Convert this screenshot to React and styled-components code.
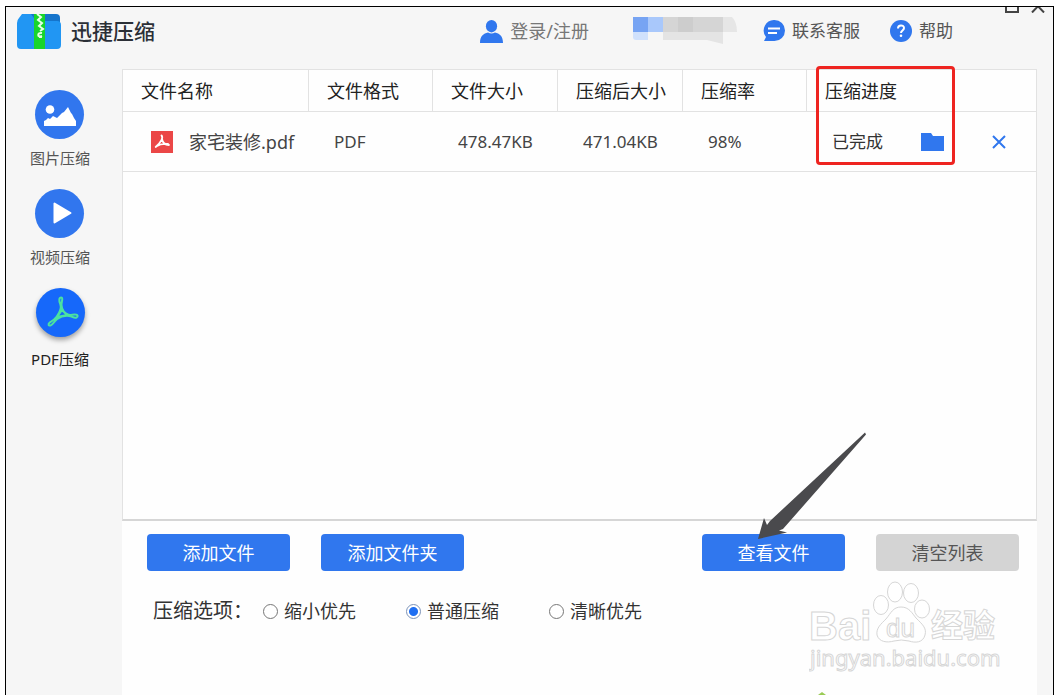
import React, { useState } from 'react';
import styled, { createGlobalStyle } from 'styled-components';

const GlobalStyle = createGlobalStyle`
  * {
    box-sizing: border-box;
  }

  body {
    margin: 0;
    background: #fff;
    color: #333;
    font-family: 'Noto Sans', 'Noto Sans CJK SC', sans-serif;
    overflow: hidden;
  }

  button {
    border: 0;
    padding: 0;
    background: none;
    color: inherit;
    font: inherit;
    cursor: pointer;
  }

  svg {
    display: block;
    flex-shrink: 0;
  }
`;

const Page = styled.div`
  display: flex;
  min-height: 100vh;
  padding: 6px 1px 0 5px;
`;

const Window = styled.div`
  position: relative;
  display: flex;
  flex: 1;
  flex-direction: column;
  border: 1px solid #000;
  border-bottom: 0;
  background: #f6f6f6;
`;

const Header = styled.header`
  position: relative;
  display: flex;
  align-items: center;
  justify-content: space-between;
  height: 48px;
  padding: 0 100px 0 11px;
`;

const Brand = styled.div`
  display: flex;
  align-items: center;
  gap: 10px;
  font-size: 21px;
  font-weight: 500;
  line-height: 30px;
  color: #2b2f36;
`;

const Nav = styled.nav`
  display: flex;
  align-items: center;
  gap: 30px;
`;

const NavLink = styled.a`
  display: flex;
  align-items: center;
  gap: 7px;
  font-size: ${props => (props.$light ? '18px' : '17px')};
  line-height: 24px;
  color: ${props => (props.$light ? '#777' : '#555')};
  text-decoration: none;
`;

const Account = styled.div`
  display: flex;
  align-items: center;
  gap: 44px;
  margin-right: -4px;
`;

const WindowControls = styled.div`
  position: absolute;
  top: 0;
  right: 8px;
  display: flex;
  gap: 12px;
`;

const Body = styled.div`
  display: flex;
  flex: 1;
  padding: 14px 16px 0 0;
`;

const Sidebar = styled.aside`
  display: flex;
  flex-direction: column;
  align-items: center;
  gap: 21px;
  width: 116px;
  padding: 21px 8px 0 0;
`;

const SideButton = styled.button`
  display: flex;
  flex-direction: column;
  align-items: center;
  gap: ${props => (props.$active ? '12px' : '9px')};
  font-size: 15px;
  line-height: 20px;
  color: ${props => (props.$active ? '#222' : '#555')};
`;

const SideIcon = styled.span`
  border-radius: 50%;
  background: ${props => (props.$active ? '#1668fa' : '#3176ee')};
  box-shadow: ${props => (props.$active ? '0 3px 5px rgba(0, 0, 0, 0.35)' : 'none')};
`;

const Main = styled.main`
  display: flex;
  flex: 1;
  flex-direction: column;
  background: #fefefe;
`;

const FilePanel = styled.section`
  position: relative;
  flex: 1;
  border: 1px solid #e2e2e2;
  border-bottom: 2px solid #d6d6d6;
`;

const FileTable = styled.table`
  width: 100%;
  border-collapse: separate;
  border-spacing: 0;
  table-layout: fixed;
  text-align: left;
`;

const HeadCell = styled.th`
  width: ${props => props.$width || 'auto'};
  height: 42px;
  padding: 0 0 0 18px;
  border-bottom: 1px solid #e2e2e2;
  border-left: ${props => (props.$first ? '0' : '1px solid #e2e2e2')};
  font-size: 18px;
  font-weight: 400;
  line-height: 26px;
  color: #222;
  white-space: nowrap;
`;

const Cell = styled.td`
  height: 60px;
  padding: 0 0 0 26px;
  border-bottom: 1px solid #e2e2e2;
  font-size: 17px;
  line-height: 26px;
  color: #444;
  white-space: nowrap;
`;

const FileName = styled.div`
  display: flex;
  align-items: center;
  gap: 16px;
  padding-left: 2px;
  font-size: 18px;
`;

const Status = styled.div`
  display: flex;
  align-items: center;
  gap: 48px;
  color: #333;
`;

const StatusText = styled.span`
  width: 89px;
  margin-right: -48px;
`;

const Highlight = styled.div`
  position: absolute;
  top: -4px;
  right: 81px;
  width: 139px;
  height: 99px;
  border: 3px solid #ee2420;
  border-radius: 4px;
  pointer-events: none;
`;

const Footer = styled.footer`
  padding: 13px 18px 70px 25px;
`;

const Actions = styled.div`
  display: flex;
  justify-content: space-between;
`;

const ActionGroup = styled.div`
  display: flex;
  gap: 31px;
`;

const ActionButton = styled.button`
  position: relative;
  width: 143px;
  height: 37px;
  border-radius: 4px;
  background: ${props => (props.$muted ? '#d4d4d4' : '#3077ee')};
  color: ${props => (props.$muted ? '#555' : '#fff')};
  font-size: 18px;
  line-height: 26px;
`;

const Pointer = styled.svg`
  position: absolute;
  top: -102px;
  left: 55px;
  pointer-events: none;
`;

const Options = styled.fieldset`
  display: flex;
  align-items: center;
  margin: 26px 0 0;
  padding: 0 0 0 6px;
  border: 0;
`;

const OptionsTitle = styled.span`
  width: 110px;
  font-size: 20px;
  line-height: 28px;
  color: #333;
`;

const Option = styled.label`
  display: flex;
  align-items: center;
  gap: 6px;
  width: 143px;
  font-size: 18px;
  line-height: 28px;
  color: #333;
  white-space: nowrap;
`;

const Radio = styled.input`
  appearance: none;
  flex-shrink: 0;
  width: 15px;
  height: 15px;
  margin: 0;
  border: 1px solid #777;
  border-radius: 50%;
  background: #fff;

  &:checked {
    border-color: #7d93b8;
    background: radial-gradient(circle, #1f6ff2 4px, #fff 5px);
  }
`;

const Watermark = styled.svg`
  position: absolute;
  right: 48px;
  bottom: 18px;
  pointer-events: none;
`;

const Sprout = styled.svg`
  position: absolute;
  right: 227px;
  bottom: 0;
`;

const ACROBAT =
  'M25.2 9.5c-2.2 0-2.4 3-1 6.5 1.6 4 0 8-3.4 12.5-2.6 3.4-4.6 4.3-6.8 5.8-2.4 1.8-1.6 4 .8 3 2.4-1 3.6-4.2 6.4-6.4 4.5-3.4 8.5-3.4 12-3 3 .6 5 2.4 7.3 1.6 2-.8 1.2-3-1-3-2.7-.2-4.6.9-7 .2-4-1.2-6.6-5-7-9.500-.2-3 2-7.700-.3-7.700z';

const Logo = () => (
  <svg width="44" height="35" viewBox="0 0 44 35">
    <path d="M7 0h32q4 0 4 4v14H1V7z" fill="#1574cb" />
    <path d="M5 0h9l5 7h21q4 0 4 4v20q0 4-4 4H4q-4 0-4-4V9q0-3 2-5z" fill="#2196f3" />
    <path d="M17 0h11v35H17z" fill="#18d52c" />
    <path d="M20 0l4 3-3 3 4 3-3 3 4 3-3 2" fill="none" stroke="#e6ffe8" strokeWidth="2" />
    <path d="M25 19c-5-1-5 5 0 3M25 23h-3" fill="none" stroke="#e6ffe8" strokeWidth="2" />
  </svg>
);

const UserIcon = () => (
  <svg width="23" height="23" viewBox="0 0 23 23" fill="#3077ee">
    <ellipse cx="11.5" cy="6.2" rx="5.6" ry="6.2" />
    <path d="M0 23c0-7 3.500-9.500 8-10.500q3.500 2 7 0c4.500 1 8 3.500 8 10.500z" />
  </svg>
);

const ChatIcon = () => (
  <svg width="22" height="22" viewBox="0 0 22 22">
    <path d="M11.500 0a10.500 10.500 0 1 1 0 21H1l2-4A10.500 10.500 0 0 1 11.500 0z" fill="#3077ee" />
    <path d="M5 8.500h12M5 13h9" stroke="#fff" strokeWidth="2" />
  </svg>
);

const HelpIcon = () => (
  <svg width="22" height="22" viewBox="0 0 22 22">
    <circle cx="11" cy="11" r="11" fill="#3077ee" />
    <path d="M8 8.500c0-4 6-4 6-.5 0 2.500-3 2.500-3 5" fill="none" stroke="#fff" strokeWidth="2" />
    <circle cx="11" cy="15.800" r="1.300" fill="#fff" />
  </svg>
);

// blurred-out account name
const MaskedName = () => (
  <svg width="104" height="28" viewBox="0 0 104 28">
    <path d="M0 0h15v15H0z" fill="#77a4f3" />
    <path d="M15 0h15v15H15z" fill="#a9c8fb" />
    <path d="M0 15h15v8H3q-3 0-3-3z" fill="#d0e1fc" />
    <path d="M30 0h15v15H30zM60 0h30v15H60z" fill="#d5d5d5" />
    <path d="M45 0h15v15H45z" fill="#cdcdcd" />
    <path d="M90 0h9q5 5 5 15H90z" fill="#e6e6e6" />
    <path d="M30 15h60v12l-16-4H30z" fill="#e4e4e4" />
  </svg>
);

const PictureIcon = () => (
  <svg width="49" height="49" viewBox="0 0 49 49" fill="#fff">
    <circle cx="15" cy="19.500" r="4.300" />
    <path d="M9 36v-5l2-1 2-2 2 1 3-3 2 1 2 1 5-5 2-1 4-5 3 6 1 1 2 4 2 3v5z" />
  </svg>
);

const PlayIcon = () => (
  <svg width="49" height="49" viewBox="0 0 49 49">
    <path d="M19.500 14.500v19L35.500 24z" fill="#fff" stroke="#fff" strokeWidth="2" strokeLinejoin="round" />
  </svg>
);

const AcrobatIcon = () => (
  <svg width="49" height="49" viewBox="0 0 49 49">
    <path d={ACROBAT} fill="none" stroke="#4ce2a0" strokeWidth="2" />
    <path d="M26 22l-5 7 10-2z" fill="#1668fa" stroke="#4ce2a0" strokeWidth="2" strokeLinejoin="round" />
  </svg>
);

const PdfIcon = () => (
  <svg width="22" height="22" viewBox="0 0 22 22">
    <path d="M0 0h22v22H0z" fill="#eb4747" />
    <path
      d="M10.500 4.500c2 2-.2 6.500-5.800 11.500M11 8c.5 3.500 3 5.700 7 6M5 15.500c4-2.500 7-3 12-2.500"
      fill="none"
      stroke="#fff"
      strokeWidth="1.800"
      strokeLinecap="round"
    />
  </svg>
);

const SIDE_ITEMS = [
  { name: '图片压缩', Icon: PictureIcon },
  { name: '视频压缩', Icon: PlayIcon },
  { name: 'PDF压缩', Icon: AcrobatIcon }
];

const COLUMNS = [
  { name: '文件名称' },
  { name: '文件格式', width: '124px' },
  { name: '文件大小', width: '125px' },
  { name: '压缩后大小', width: '125px' },
  { name: '压缩率', width: '124px' },
  { name: '压缩进度', width: '230px' }
];

const FILES = [{ name: '家宅装修.pdf', format: 'PDF', size: '478.47KB', compressed: '471.04KB', ratio: '98%', status: '已完成' }];

const OPTIONS = ['缩小优先', '普通压缩', '清晰优先'];

const App = () => {
  const [mode, setMode] = useState('PDF压缩');
  const [option, setOption] = useState('普通压缩');

  return (
    <Page>
      <GlobalStyle />
      <Window>
        <Header>
          <Brand>
            <Logo />
            迅捷压缩
          </Brand>
          <Nav>
            <Account>
              <NavLink href="#login" $light>
                <UserIcon />
                登录/注册
              </NavLink>
              <MaskedName />
            </Account>
            <NavLink href="#service">
              <ChatIcon />
              联系客服
            </NavLink>
            <NavLink href="#help">
              <HelpIcon />
              帮助
            </NavLink>
          </Nav>
          <WindowControls>
            <button aria-label="最大化">
              <svg width="14" height="6" viewBox="0 0 14 6">
                <path d="M1-4v9h12v-9" fill="none" stroke="#444" strokeWidth="2" />
              </svg>
            </button>
            <button aria-label="关闭">
              <svg width="14" height="6" viewBox="0 0 14 6">
                <path d="M1 5.500L12-6M13 5.500L2-6" fill="none" stroke="#444" strokeWidth="2" />
              </svg>
            </button>
          </WindowControls>
        </Header>
        <Body>
          <Sidebar>
            {SIDE_ITEMS.map(({ name, Icon }) => (
              <SideButton key={name} $active={mode === name} onClick={() => setMode(name)}>
                <SideIcon $active={mode === name}>
                  <Icon />
                </SideIcon>
                {name}
              </SideButton>
            ))}
          </Sidebar>
          <Main>
            <FilePanel>
              <FileTable>
                <thead>
                  <tr>
                    {COLUMNS.map((column, i) => (
                      <HeadCell key={column.name} $width={column.width} $first={i === 0}>
                        {column.name}
                      </HeadCell>
                    ))}
                  </tr>
                </thead>
                <tbody>
                  {FILES.map(file => (
                    <tr key={file.name}>
                      <Cell>
                        <FileName>
                          <PdfIcon />
                          {file.name}
                        </FileName>
                      </Cell>
                      <Cell>{file.format}</Cell>
                      <Cell>{file.size}</Cell>
                      <Cell>{file.compressed}</Cell>
                      <Cell>{file.ratio}</Cell>
                      <Cell>
                        <Status>
                          <StatusText>{file.status}</StatusText>
                          <button aria-label="打开文件夹">
                            <svg width="23" height="18" viewBox="0 0 23 18">
                              <path d="M0 0h10l2 3h11v15H0z" fill="#3077ee" />
                            </svg>
                          </button>
                          <button aria-label="删除">
                            <svg width="14" height="14" viewBox="0 0 14 14">
                              <path d="M1 1l12 12M13 1L1 13" stroke="#3077ee" strokeWidth="2" />
                            </svg>
                          </button>
                        </Status>
                      </Cell>
                    </tr>
                  ))}
                </tbody>
              </FileTable>
              <Highlight />
            </FilePanel>
            <Footer>
              <Actions>
                <ActionGroup>
                  <ActionButton>添加文件</ActionButton>
                  <ActionButton>添加文件夹</ActionButton>
                </ActionGroup>
                <ActionGroup>
                  <ActionButton>
                    查看文件
                    <Pointer width="110" height="108" viewBox="0 0 110 108">
                      <path d="M108 0.500l1 2L26 97l-4 1.500 8 2L1 107l6-21 3 7 3-4z" fill="#4a4a4d" />
                    </Pointer>
                  </ActionButton>
                  <ActionButton $muted>清空列表</ActionButton>
                </ActionGroup>
              </Actions>
              <Options>
                <OptionsTitle>压缩选项：</OptionsTitle>
                {OPTIONS.map(name => (
                  <Option key={name}>
                    <Radio type="radio" name="option" checked={option === name} onChange={() => setOption(name)} />
                    {name}
                  </Option>
                ))}
              </Options>
            </Footer>
          </Main>
        </Body>
        <Watermark width="196" height="96" viewBox="0 0 196 96" fill="#fff" stroke="#d6d6d6" strokeWidth="1">
          <g fontFamily="'Noto Sans', 'Noto Sans CJK SC', sans-serif" fontWeight="700">
            <text x="0" y="59" fontSize="40" fontFamily="'Liberation Sans', sans-serif">Bai</text>
            <text x="122" y="56" fontSize="32">经验</text>
          </g>
          <ellipse cx="72" cy="24" rx="7.500" ry="9.500" />
          <ellipse cx="86" cy="11" rx="7.500" ry="10" />
          <ellipse cx="102" cy="12" rx="7.500" ry="9.500" />
          <ellipse cx="113" cy="28" rx="7.500" ry="9" />
          <path d="M92 26c8 0 11 6 15 11 6 6 11 10 9 17-2 8-10 8-16 6q-8-2-15 0c-7 2-15 1-17-6-1-7 4-11 9-16 5-6 7-12 15-12z" />
          <text x="77" y="56" fontSize="26" fontFamily="'Liberation Sans', sans-serif">du</text>
          <text x="1" y="85" fontSize="22" fontFamily="'Noto Sans', sans-serif">jingyan.baidu.com</text>
        </Watermark>
        <Sprout width="8" height="3" viewBox="0 0 8 3">
          <path d="M0 3l4-3 4 3z" fill="#9acb55" />
        </Sprout>
      </Window>
    </Page>
  );
};

export default App;
